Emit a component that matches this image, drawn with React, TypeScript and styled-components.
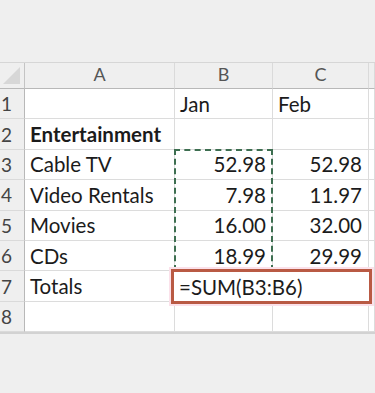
import React from "react";
import styled, { createGlobalStyle } from "styled-components";

interface IRow {
  label: string;
  jan: string;
  feb: string;
  bold?: boolean;
}

const rows: IRow[] = [
  { label: "", jan: "Jan", feb: "Feb" },
  { label: "Entertainment", jan: "", feb: "", bold: true },
  { label: "Cable TV", jan: "52.98", feb: "52.98" },
  { label: "Video Rentals", jan: "7.98", feb: "11.97" },
  { label: "Movies", jan: "16.00", feb: "32.00" },
  { label: "CDs", jan: "18.99", feb: "29.99" },
  { label: "Totals", jan: "", feb: "" },
  { label: "", jan: "", feb: "" },
];

const GlobalStyle = createGlobalStyle`
  html, body {
    margin: 0;
    padding: 0;
    background: #efefef;
    font-family: Lato, "Liberation Sans", sans-serif;
    overflow: hidden;
  }
`;

const Page = styled.div`
  height: 393px;
  padding-top: 62px;
  box-sizing: border-box;
`;

const Sheet = styled.div`
  display: grid;
  grid-template-columns: 25px 150px 98px 96px 1fr;
  grid-template-rows: 26px repeat(8, 30.4px);
  background: #ffffff;
  border-top: 1px solid #d6d6d6;
  border-bottom: 2px solid #d2d2d2;
`;

const Corner = styled.div`
  grid-column: 1;
  grid-row: 1;
  background: #efefef;
  border-right: 1px solid #c4c4c4;
  border-bottom: 1px solid #b8b8b8;
  display: flex;
  align-items: flex-end;
  justify-content: flex-end;
  padding: 0 4px 4px 0;
`;

const Triangle = styled.div`
  width: 0;
  height: 0;
  border-left: 17px solid transparent;
  border-bottom: 17px solid #d7d7d7;
`;

const ColHead = styled.div<{ $col: number }>`
  grid-column: ${p => p.$col};
  grid-row: 1;
  background: #efefef;
  border-right: 1px solid #dadada;
  border-bottom: 1px solid #b8b8b8;
  color: #555;
  font-size: 18px;
  display: flex;
  align-items: center;
  justify-content: center;
  padding-bottom: 3px;
`;

const RowHead = styled.div<{ $row: number }>`
  grid-column: 1;
  grid-row: ${p => p.$row};
  background: #efefef;
  border-right: 1px solid #b8b8b8;
  border-bottom: 1px solid #dadada;
  color: #444;
  font-size: 19px;
  display: flex;
  align-items: center;
  padding-left: 1px;
`;

const Cell = styled.div<{ $row: number; $col: number; $right?: boolean; $bold?: boolean }>`
  grid-column: ${p => p.$col};
  grid-row: ${p => p.$row};
  border-right: 1px solid #dcdcdc;
  border-bottom: 1px solid #dcdcdc;
  color: #1b1b1b;
  font-size: 20.5px;
  font-weight: ${p => (p.$bold ? 700 : 400)};
  display: flex;
  align-items: center;
  justify-content: ${p => (p.$right ? "flex-end" : "flex-start")};
  padding: 0 ${p => (p.$right ? "6px" : "0")} 0 5px;
  white-space: nowrap;
  min-width: 0;
`;

const Marquee = styled.div`
  grid-column: 3;
  grid-row: 4 / 8;
  margin: -1px 0 0 -1px;
  border: 2px dashed #3d6e50;
  pointer-events: none;
  z-index: 1;
`;

const Highlight = styled.div`
  grid-column: 3 / span 2;
  grid-row: 8;
  margin: -2px -3px -2px -4px;
  border: 3px solid #b95a44;
  box-shadow: 0 0 0 2px #fbe1ea;
  background: #ffffff;
  color: #1b1b1b;
  font-size: 20.5px;
  display: flex;
  align-items: center;
  padding-left: 5px;
  z-index: 1;
`;

function App() {
  return (
    <Page>
      <GlobalStyle />
      <Sheet>
        <Corner>
          <Triangle />
        </Corner>
        <ColHead $col={2}>A</ColHead>
        <ColHead $col={3}>B</ColHead>
        <ColHead $col={4}>C</ColHead>
        <ColHead $col={5} />
        {rows.map((row, i) => (
          <React.Fragment key={i}>
            <RowHead $row={i + 2}>{i + 1}</RowHead>
            <Cell $row={i + 2} $col={2} $bold={row.bold}>
              {row.label}
            </Cell>
            <Cell $row={i + 2} $col={3} $right={i > 0}>
              {row.jan}
            </Cell>
            <Cell $row={i + 2} $col={4} $right={i > 0}>
              {row.feb}
            </Cell>
            <Cell $row={i + 2} $col={5} />
          </React.Fragment>
        ))}
        <Marquee />
        <Highlight>=SUM(B3:B6)</Highlight>
      </Sheet>
    </Page>
  );
}

export default App;
